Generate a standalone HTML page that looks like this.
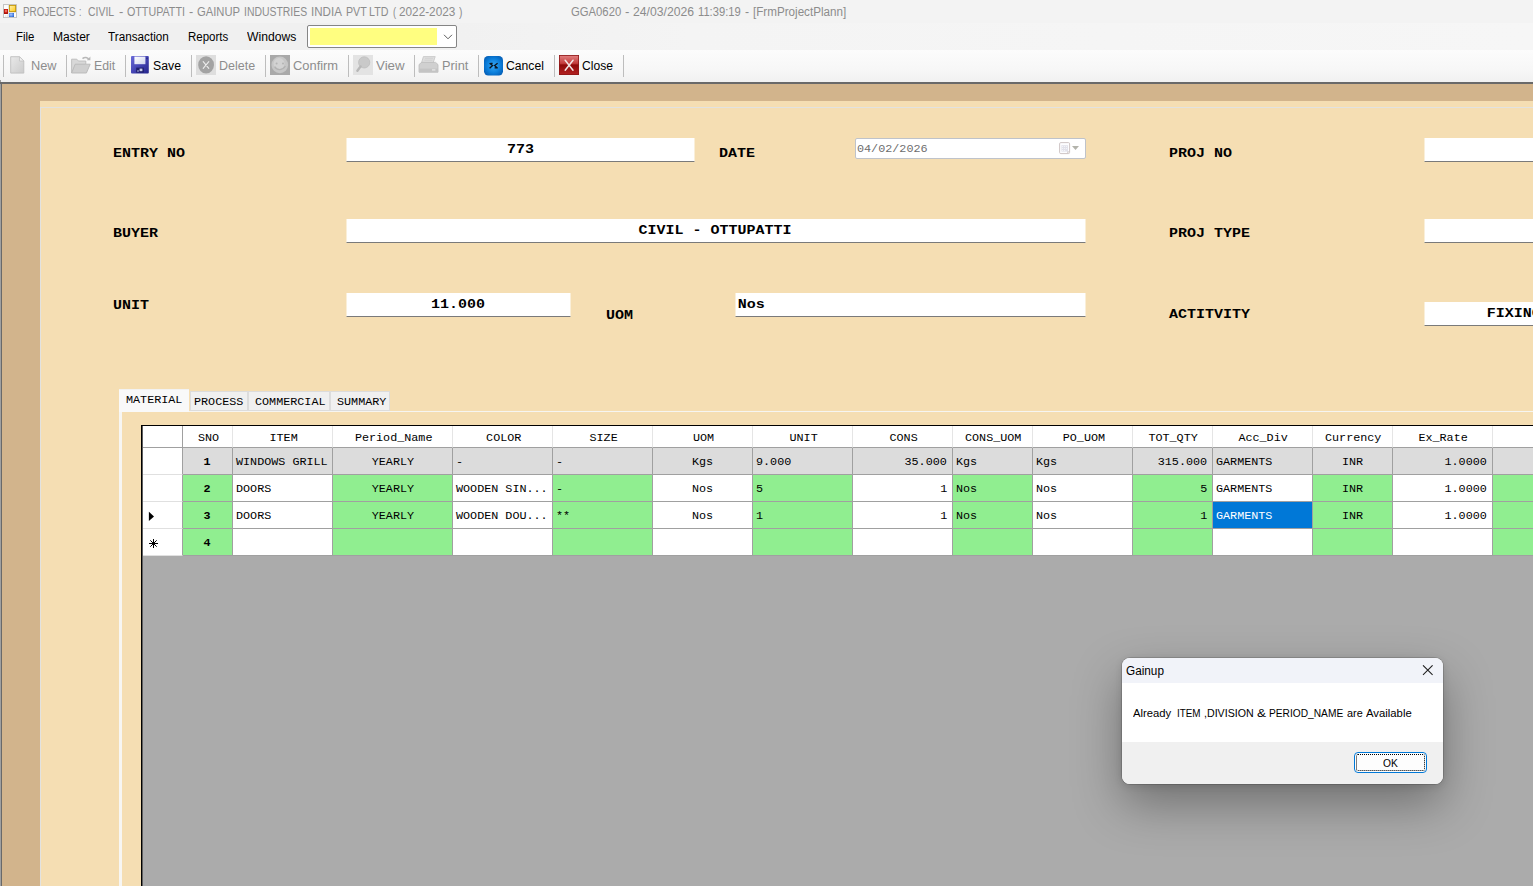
<!DOCTYPE html><html><head><meta charset="utf-8"><title>FrmProjectPlann</title><style>
html,body{margin:0;padding:0}
body{width:1533px;height:886px;overflow:hidden;position:relative;background:#d2b48c;font-family:"Liberation Sans",sans-serif;font-size:12px;color:#000}
div,span{position:absolute;box-sizing:border-box;white-space:pre}
i{font-style:normal;display:inline-block;white-space:pre}
.u{transform-origin:0 0;font-family:"Liberation Sans",sans-serif}
.mono{font-family:"Liberation Mono",monospace}
#title{left:0;top:0;width:1533px;height:23px;background:#f3f3f3}
#title span{top:5px;font-size:12px;color:#8c8c8c;line-height:15px}
#menu{left:0;top:23px;width:1533px;height:27px;background:linear-gradient(to right,#f0f0f0 0,#f0f0f0 25%,#f4f4f4 45%,#f6f6f6 100%)}
#menu span{top:7px;font-size:12px;line-height:15px;color:#000}
#tool{left:0;top:50px;width:1533px;height:32px;background:linear-gradient(#fcfcfc,#f7f7f7 60%,#f1f1f1)}
#tool .sep{top:5px;width:1px;height:22px;background:#bdbdbd}
#tool .t{top:8px;font-size:12.5px;line-height:16px;color:#000}
#tool .d{color:#8d8d8d}
svg{position:absolute}
#dark{left:0;top:82px;width:1533px;height:2px;background:#696969}
#lft0{left:0;top:84px;width:1px;height:802px;background:#a0a0a0}
#lft1{left:1px;top:82px;width:1px;height:804px;background:#696969}
#panel{left:40px;top:101px;width:1493px;height:785px;background:#f5deb3}
#gb{left:40px;top:107px;width:1500px;height:800px;border-left:1px solid #e2e2e0;border-top:1px solid #e2e2e0}
.lbl{font-family:"Liberation Mono",monospace;font-weight:bold;font-size:13px;line-height:16px;color:#000;transform:translateY(-0.2px) scaleX(1.1538);transform-origin:0 0}
.tb{background:#fff;border-bottom:1px solid #7a7a7a;height:24px;font-family:"Liberation Mono",monospace;font-weight:bold;font-size:13px;line-height:22px;text-align:center;overflow:hidden;transform:translateX(0.5px)}
.tb i{transform:translate(-0.8px,0.7px) scaleX(1.1538)}
.tab{font-family:"Liberation Mono",monospace;font-size:10.5px;line-height:13px;color:#000;transform:scaleX(1.119);transform-origin:0 0}
.g{font-family:"Liberation Mono",monospace;font-size:10.5px;line-height:26px;color:#000;overflow:hidden;border-right:1px solid #a0a0a0;border-bottom:1px solid #a0a0a0;height:27px}
.g i{transform:translateY(0.6px) scaleX(1.119)}.gh i{transform:translate(1px,0.2px) scaleX(1.119)}
.gh{font-family:"Liberation Mono",monospace;font-size:10.5px;line-height:25px;color:#000;overflow:hidden;background:#fff;border-right:1px solid #e5e5e5;border-bottom:1px solid #a0a0a0;height:22px;text-align:center;top:426px}
.c{text-align:center}.r{text-align:right;padding-right:5px}.l{text-align:left;padding-left:3px}
.r i{transform-origin:100% 0}.l i{transform-origin:0 0}
.b{font-weight:bold}
.gr{background:#90ee90}.wh{background:#fff}.gy{background:#dcdcdc}.sel{background:#0078d7;color:#fff}
</style></head><body>
<div id="title">
<svg style="left:3px;top:4px" width="14" height="14" viewBox="0 0 14 14"><defs><linearGradient id="iy" x1="0" y1="0" x2="1" y2="1"><stop offset="0" stop-color="#fff3b0"/><stop offset="1" stop-color="#ffc814"/></linearGradient><radialGradient id="ir" cx="0.5" cy="0.4" r="0.6"><stop offset="0" stop-color="#ffb0a8"/><stop offset="0.5" stop-color="#d8281a"/><stop offset="1" stop-color="#9a0800"/></radialGradient><radialGradient id="ib" cx="0.4" cy="0.4" r="0.7"><stop offset="0" stop-color="#a8c8ff"/><stop offset="1" stop-color="#2a66d4"/></radialGradient></defs><rect x="0.5" y="0.6" width="13" height="13" fill="#fdfdfd" stroke="#bdbdbd" stroke-width="0.9"/><path d="M5.6 0.6v13M0.5 8.6h5M5.6 8.4h8" stroke="#d4d4d4" stroke-width="0.6"/><rect x="0.9" y="4.9" width="4.1" height="5.1" rx="0.4" fill="url(#ir)"/><rect x="6.4" y="1.4" width="6.2" height="6.2" fill="url(#iy)" stroke="#c39400" stroke-width="0.9"/><rect x="6" y="9" width="5" height="4" fill="url(#ib)"/><path d="M4.6 10.6v2.8M2.8 11v2.4" stroke="#cfcfcf" stroke-width="0.5"/></svg>
<span id="t0" class="u " style="left:23.15px;transform:scaleX(0.8232);">PROJECTS</span>
<span id="t1" class="u " style="left:79.35px;transform:scaleX(0.7178);">:</span>
<span id="t2" class="u " style="left:88.45px;transform:scaleX(0.8695);">CIVIL</span>
<span id="t3" class="u " style="left:119.05px;transform:scaleX(1.0750);">-</span>
<span id="t4" class="u " style="left:126.55px;transform:scaleX(0.8923);">OTTUPATTI</span>
<span id="t5" class="u " style="left:189.15px;transform:scaleX(1.0500);">-</span>
<span id="t6" class="u " style="left:196.55px;transform:scaleX(0.9366);">GAINUP</span>
<span id="t7" class="u " style="left:243.85px;transform:scaleX(0.8681);">INDUSTRIES</span>
<span id="t8" class="u " style="left:310.95px;transform:scaleX(0.9652);">INDIA</span>
<span id="t9" class="u " style="left:345.75px;transform:scaleX(0.8867);">PVT</span>
<span id="t10" class="u " style="left:369.45px;transform:scaleX(0.8907);">LTD</span>
<span id="t11" class="u " style="left:392.55px;transform:scaleX(0.7750);">(</span>
<span id="t12" class="u " style="left:398.95px;transform:scaleX(0.9810);">2022-2023</span>
<span id="t13" class="u " style="left:458.65px;transform:scaleX(0.8500);">)</span>
<span id="t14" class="u " style="left:570.95px;transform:scaleX(0.9405);">GGA0620</span>
<span id="t15" class="u " style="left:624.95px;transform:scaleX(1.1000);">-</span>
<span id="t16" class="u " style="left:632.55px;transform:scaleX(1.0156);">24/03/2026</span>
<span id="t17" class="u " style="left:697.75px;transform:scaleX(0.9317);">11:39:19</span>
<span id="t18" class="u " style="left:744.65px;transform:scaleX(1.0250);">-</span>
<span id="t19" class="u " style="left:752.55px;transform:scaleX(0.9705);">[FrmProjectPlann]</span>
</div>
<div id="menu">
<span id="m0" class="u " style="left:16.05px;transform:scaleX(0.9512);">File</span>
<span id="m1" class="u " style="left:52.95px;transform:scaleX(1.0058);">Master</span>
<span id="m2" class="u " style="left:108.35px;transform:scaleX(0.9767);">Transaction</span>
<span id="m3" class="u " style="left:188.25px;transform:scaleX(0.9564);">Reports</span>
<span id="m4" class="u " style="left:246.75px;transform:scaleX(1.0126);">Windows</span>
<div style="left:307px;top:2px;width:150px;height:23px;background:#fff;border:1px solid #858585;border-radius:2px"></div>
<div style="left:310px;top:5px;width:127px;height:17px;background:#fffe80"></div>
<svg style="left:443px;top:11px" width="10" height="7" viewBox="0 0 10 7"><path d="M1 0.8 L5 4.8 L9 0.8" fill="none" stroke="#555" stroke-width="0.95"/></svg>
</div>
<div id="tool">
<div class="sep" style="left:3px"></div>
<div class="sep" style="left:66px"></div>
<div class="sep" style="left:125px"></div>
<div class="sep" style="left:191px"></div>
<div class="sep" style="left:265px"></div>
<div class="sep" style="left:348px"></div>
<div class="sep" style="left:414px"></div>
<div class="sep" style="left:478px"></div>
<div class="sep" style="left:554px"></div>
<div class="sep" style="left:623px"></div>
<span id="b0" class="u t d" style="left:31.05px;transform:scaleX(1.0234);">New</span>
<span id="b1" class="u t d" style="left:94.25px;transform:scaleX(0.9839);">Edit</span>
<span id="b2" class="u t" style="left:153.15px;transform:scaleX(0.9825);">Save</span>
<span id="b3" class="u t d" style="left:219.05px;transform:scaleX(0.9989);">Delete</span>
<span id="b4" class="u t d" style="left:293.15px;transform:scaleX(1.0305);">Confirm</span>
<span id="b5" class="u t d" style="left:375.85px;transform:scaleX(1.0642);">View</span>
<span id="b6" class="u t d" style="left:442.25px;transform:scaleX(1.0232);">Print</span>
<span id="b7" class="u t" style="left:506.25px;transform:scaleX(0.9737);">Cancel</span>
<span id="b8" class="u t" style="left:582.15px;transform:scaleX(0.9666);">Close</span>
<svg style="left:10px;top:6px" width="15" height="18" viewBox="0 0 15 18"><defs><linearGradient id="gn" x1="0" y1="0" x2="1" y2="1"><stop offset="0" stop-color="#e9e9e9"/><stop offset="1" stop-color="#cbcbcb"/></linearGradient></defs><path d="M0.7 0.7h8.8l4.3 4.3v12.1H0.7z" fill="url(#gn)" stroke="#bfbfbf" stroke-width="0.9"/><path d="M9.5 0.7v4.3h4.3z" fill="#f1f1f1" stroke="#bfbfbf" stroke-width="0.7"/></svg>
<svg style="left:71px;top:6px" width="20" height="18" viewBox="0 0 20 18"><path d="M0.6 17V3.2h5.2l1.6 1.8h7.4v3" fill="#d8d8d8" stroke="#bcbcbc" stroke-width="0.9"/><path d="M0.6 17l3.6-8.8h15l-3.8 8.8z" fill="#cfcfcf" stroke="#b8b8b8" stroke-width="0.9"/><path d="M11.5 2.6c2.2-1.8 5-1.4 6.3 0.8" fill="none" stroke="#b8b8b8" stroke-width="1.6"/><path d="M15.8 4.2h3.6V0.6z" fill="#b8b8b8"/></svg>
<svg style="left:131px;top:6px" width="18" height="18" viewBox="0 0 18 18"><defs><linearGradient id="gs" x1="0" y1="0" x2="1" y2="1"><stop offset="0" stop-color="#6a6ad8"/><stop offset="0.5" stop-color="#4545b4"/><stop offset="1" stop-color="#24248a"/></linearGradient><linearGradient id="gl" x1="0" y1="0" x2="1" y2="1"><stop offset="0" stop-color="#ffffff"/><stop offset="1" stop-color="#cfd4ee"/></linearGradient></defs><rect x="0" y="0" width="17.8" height="17.6" rx="1" fill="url(#gs)"/><rect x="3.4" y="0.6" width="11" height="7.6" fill="url(#gl)"/><rect x="15.4" y="1.6" width="1.2" height="1.6" fill="#22227a"/><rect x="5.2" y="11.6" width="7.6" height="5" fill="#1e1e6e"/><rect x="8.6" y="12.6" width="2.8" height="2.6" fill="#c8cce8"/><rect x="6" y="14.4" width="2" height="1.2" fill="#9aa0d0"/></svg>
<svg style="left:196px;top:5px" width="20" height="20" viewBox="0 0 20 20"><rect width="20" height="20" fill="#dedede"/><ellipse cx="10.1" cy="9.9" rx="7.9" ry="8.6" fill="#a3a3a3"/><path d="M7.2 6.6l5.6 6.8M12.8 6.6l-5.6 6.8" stroke="#ececec" stroke-width="1.1" stroke-linecap="round"/></svg>
<svg style="left:270px;top:5px" width="20" height="20" viewBox="0 0 20 20"><rect width="20" height="20" fill="#a9a9a9"/><circle cx="9.8" cy="9.9" r="8.3" fill="#c6c6c6"/><circle cx="9" cy="8.6" r="5.5" fill="#d2d2d2"/><circle cx="6.6" cy="8.4" r="1" fill="#b4b4b4"/><circle cx="13" cy="8.4" r="1" fill="#b4b4b4"/><path d="M4.6 11.6c2.6 4 8 4 10.8-0.6" fill="none" stroke="#b2b2b2" stroke-width="1.3"/></svg>
<svg style="left:353px;top:5px" width="20" height="20" viewBox="0 0 20 20"><rect width="20" height="20" fill="#e3e3e3"/><circle cx="11.2" cy="7.4" r="5.6" fill="#c9c9c9" stroke="#bcbcbc" stroke-width="0.8"/><path d="M7.6 11.4L4.4 15.8" stroke="#b8b8b8" stroke-width="2.4" stroke-linecap="round"/></svg>
<svg style="left:418px;top:6px" width="21" height="18" viewBox="0 0 21 18"><path d="M5.4 0.6h11.8l-2.2 6.6H3.4z" fill="#dedede" stroke="#c4c4c4" stroke-width="0.8"/><path d="M7 2.4h8M6.4 4.2h8" stroke="#d0d0d0" stroke-width="0.9"/><path d="M1 8.6l2.6-2.2h14l2.4 2.2v7.6H1z" fill="#d0d0d0" stroke="#bdbdbd" stroke-width="0.8"/><rect x="1" y="12.6" width="19" height="3.6" fill="#c4c4c4"/><rect x="14" y="13.2" width="3.4" height="1.4" fill="#e4e4e4"/></svg>
<svg style="left:484px;top:5.5px" width="19" height="20" viewBox="0 0 19 20"><defs><radialGradient id="gc" cx="0.5" cy="0.5" r="0.6"><stop offset="0" stop-color="#3aa8f4"/><stop offset="0.6" stop-color="#0c80dc"/><stop offset="1" stop-color="#0560b8"/></radialGradient></defs><rect x="0" y="0" width="19" height="19.4" rx="4.2" fill="url(#gc)"/><path d="M5.6 7.2l3 2.4-3 2.6M13.6 7.2l-3 2.4 3 2.6M6.6 7.4h2M10.6 11.8h2.2" fill="none" stroke="#0a1420" stroke-width="1.3"/></svg>
<svg style="left:559px;top:5px" width="20" height="20" viewBox="0 0 20 20"><defs><linearGradient id="gx" x1="0" y1="0" x2="0" y2="1"><stop offset="0" stop-color="#e48484"/><stop offset="0.42" stop-color="#c23c3c"/><stop offset="0.5" stop-color="#8e0a0a"/><stop offset="1" stop-color="#b42222"/></linearGradient></defs><rect width="20" height="20" fill="url(#gx)"/><rect x="0.4" y="0.4" width="19.2" height="19.2" fill="none" stroke="#8e1818" stroke-width="0.8"/><path d="M6.2 5.2l7.8 10M14 5.2L6.2 15.2" stroke="#f1e4e4" stroke-width="1.5" stroke-linecap="round"/></svg>

</div>
<div style="left:0;top:80px;width:1px;height:2px;background:#9a9a9a"></div>
<div id="dark"></div><div id="lft0"></div><div id="lft1"></div>
<div id="panel"></div><div id="gb"></div>
<span class="lbl" style="left:113px;top:146px">ENTRY NO</span>
<span class="lbl" style="left:719px;top:146px">DATE</span>
<span class="lbl" style="left:1169px;top:146px">PROJ NO</span>
<span class="lbl" style="left:113px;top:226px">BUYER</span>
<span class="lbl" style="left:1169px;top:226px">PROJ TYPE</span>
<span class="lbl" style="left:113px;top:298px">UNIT</span>
<span class="lbl" style="left:606px;top:307.5px">UOM</span>
<span class="lbl" style="left:1169px;top:307px">ACTITVITY</span>
<div class="tb" style="left:346px;top:138px;width:348px"><i style="left:1px;position:relative">773</i></div>
<div class="tb" style="left:1424px;top:138px;width:120px"></div>
<div class="tb" style="left:346px;top:219px;width:739px"><i>CIVIL - OTTUPATTI</i></div>
<div class="tb" style="left:1424px;top:219px;width:120px"></div>
<div class="tb" style="left:346px;top:293px;width:224px"><i>11.000</i></div>
<div class="tb l" style="left:735px;top:293px;width:350px;padding-left:2.5px"><i>Nos</i></div>
<div class="tb l" style="left:1424px;top:302px;width:200px;padding-left:63px"><i>FIXING</i></div>
<div style="left:855px;top:138px;width:231px;height:21px;background:#fff;border:1px solid #bfc3ca;border-radius:2px"></div>
<span class="tab" style="left:857px;top:141px;line-height:14px;color:#6d6d6d;transform:translateY(0.5px) scaleX(1.12)">04/02/2026</span>
<svg style="left:1058px;top:141px" width="24" height="14" viewBox="0 0 24 14"><rect x="1.6" y="1.6" width="10" height="11" rx="1.2" fill="#fdfdff" stroke="#c8bebe" stroke-width="0.9"/><rect x="3.4" y="4.2" width="6.6" height="6.4" fill="#e1e1ea"/><g fill="#fbfbfe"><rect x="4.2" y="5" width="0.9" height="0.9"/><rect x="6.2" y="5" width="0.9" height="0.9"/><rect x="8.2" y="5" width="0.9" height="0.9"/><rect x="4.2" y="7" width="0.9" height="0.9"/><rect x="6.2" y="7" width="0.9" height="0.9"/><rect x="8.2" y="7" width="0.9" height="0.9"/><rect x="4.2" y="9" width="0.9" height="0.9"/><rect x="6.2" y="9" width="0.9" height="0.9"/></g><path d="M9.4 12.4l2-2h-2z" fill="#c8bebe"/><path d="M14 5h7l-3.5 4z" fill="#b3b3ab"/></svg>
<div style="left:119px;top:411px;width:1420px;height:480px;border-left:3px solid #f7f6f3;border-top:1px solid #f6f5f1"></div>
<div style="left:119px;top:389px;width:70px;height:23px;background:#f9f9f9;border-top:1px solid #f2f2f2"></div>
<span class="tab" style="left:125.6px;top:394px">MATERIAL</span>
<div style="left:190px;top:391px;width:58px;height:20px;background:#f0f0f0;border:1px solid #dcdcdc"></div>
<span class="tab" style="left:194.4px;top:396px">PROCESS</span>
<div style="left:248px;top:391px;width:82px;height:20px;background:#f0f0f0;border:1px solid #dcdcdc"></div>
<span class="tab" style="left:254.8px;top:396px">COMMERCIAL</span>
<div style="left:330px;top:391px;width:60px;height:20px;background:#f0f0f0;border:1px solid #dcdcdc"></div>
<span class="tab" style="left:337.2px;top:396px">SUMMARY</span>
<div style="left:141px;top:425px;width:1400px;height:470px;background:#ababab;border-left:1px solid #000;border-top:1px solid #000;box-shadow:inset 1px 1px 0 #5e5e5e"></div>
<div class="gh" style="left:143px;width:40px;border-right:1px solid #a0a0a0"></div>
<div class="gh" style="left:183px;width:50px"><i>SNO</i></div>
<div class="gh" style="left:233px;width:100px"><i>ITEM</i></div>
<div class="gh" style="left:333px;width:120px"><i>Period_Name</i></div>
<div class="gh" style="left:453px;width:100px"><i>COLOR</i></div>
<div class="gh" style="left:553px;width:100px"><i>SIZE</i></div>
<div class="gh" style="left:653px;width:100px"><i>UOM</i></div>
<div class="gh" style="left:753px;width:100px"><i>UNIT</i></div>
<div class="gh" style="left:853px;width:100px"><i>CONS</i></div>
<div class="gh" style="left:953px;width:80px"><i>CONS_UOM</i></div>
<div class="gh" style="left:1033px;width:100px"><i>PO_UOM</i></div>
<div class="gh" style="left:1133px;width:80px"><i>TOT_QTY</i></div>
<div class="gh" style="left:1213px;width:100px"><i>Acc_Div</i></div>
<div class="gh" style="left:1313px;width:80px"><i>Currency</i></div>
<div class="gh" style="left:1393px;width:100px"><i>Ex_Rate</i></div>
<div class="gh" style="left:1493px;width:60px"><i></i></div>
<div class="g wh" style="left:143px;top:448px;width:40px;border-bottom-color:#e0e0e0"></div>
<div class="g gy c b" style="left:183px;top:448px;width:50px"><i>1</i></div>
<div class="g gy l" style="left:233px;top:448px;width:100px"><i>WINDOWS GRILL</i></div>
<div class="g gy c" style="left:333px;top:448px;width:120px"><i>YEARLY</i></div>
<div class="g gy l" style="left:453px;top:448px;width:100px"><i>-</i></div>
<div class="g gy l" style="left:553px;top:448px;width:100px"><i>-</i></div>
<div class="g gy c" style="left:653px;top:448px;width:100px"><i>Kgs</i></div>
<div class="g gy l" style="left:753px;top:448px;width:100px"><i>9.000</i></div>
<div class="g gy r" style="left:853px;top:448px;width:100px"><i>35.000</i></div>
<div class="g gy l" style="left:953px;top:448px;width:80px"><i>Kgs</i></div>
<div class="g gy l" style="left:1033px;top:448px;width:100px"><i>Kgs</i></div>
<div class="g gy r" style="left:1133px;top:448px;width:80px"><i>315.000</i></div>
<div class="g gy l" style="left:1213px;top:448px;width:100px"><i>GARMENTS</i></div>
<div class="g gy c" style="left:1313px;top:448px;width:80px"><i>INR</i></div>
<div class="g gy r" style="left:1393px;top:448px;width:100px"><i>1.0000</i></div>
<div class="g gy l" style="left:1493px;top:448px;width:60px"></div>
<div class="g wh" style="left:143px;top:475px;width:40px;border-bottom-color:#e0e0e0"></div>
<div class="g gr c b" style="left:183px;top:475px;width:50px"><i>2</i></div>
<div class="g wh l" style="left:233px;top:475px;width:100px"><i>DOORS</i></div>
<div class="g gr c" style="left:333px;top:475px;width:120px"><i>YEARLY</i></div>
<div class="g wh l" style="left:453px;top:475px;width:100px"><i>WOODEN SIN...</i></div>
<div class="g gr l" style="left:553px;top:475px;width:100px"><i>-</i></div>
<div class="g wh c" style="left:653px;top:475px;width:100px"><i>Nos</i></div>
<div class="g gr l" style="left:753px;top:475px;width:100px"><i>5</i></div>
<div class="g wh r" style="left:853px;top:475px;width:100px"><i>1</i></div>
<div class="g gr l" style="left:953px;top:475px;width:80px"><i>Nos</i></div>
<div class="g wh l" style="left:1033px;top:475px;width:100px"><i>Nos</i></div>
<div class="g gr r" style="left:1133px;top:475px;width:80px"><i>5</i></div>
<div class="g wh l" style="left:1213px;top:475px;width:100px"><i>GARMENTS</i></div>
<div class="g gr c" style="left:1313px;top:475px;width:80px"><i>INR</i></div>
<div class="g wh r" style="left:1393px;top:475px;width:100px"><i>1.0000</i></div>
<div class="g gr l" style="left:1493px;top:475px;width:60px"></div>
<div class="g wh" style="left:143px;top:502px;width:40px;border-bottom-color:#e0e0e0"></div>
<div class="g gr c b" style="left:183px;top:502px;width:50px"><i>3</i></div>
<div class="g wh l" style="left:233px;top:502px;width:100px"><i>DOORS</i></div>
<div class="g gr c" style="left:333px;top:502px;width:120px"><i>YEARLY</i></div>
<div class="g wh l" style="left:453px;top:502px;width:100px"><i>WOODEN DOU...</i></div>
<div class="g gr l" style="left:553px;top:502px;width:100px"><i>**</i></div>
<div class="g wh c" style="left:653px;top:502px;width:100px"><i>Nos</i></div>
<div class="g gr l" style="left:753px;top:502px;width:100px"><i>1</i></div>
<div class="g wh r" style="left:853px;top:502px;width:100px"><i>1</i></div>
<div class="g gr l" style="left:953px;top:502px;width:80px"><i>Nos</i></div>
<div class="g wh l" style="left:1033px;top:502px;width:100px"><i>Nos</i></div>
<div class="g gr r" style="left:1133px;top:502px;width:80px"><i>1</i></div>
<div class="g sel l" style="left:1213px;top:502px;width:100px"><i>GARMENTS</i></div>
<div class="g gr c" style="left:1313px;top:502px;width:80px"><i>INR</i></div>
<div class="g wh r" style="left:1393px;top:502px;width:100px"><i>1.0000</i></div>
<div class="g gr l" style="left:1493px;top:502px;width:60px"></div>
<div class="g wh" style="left:143px;top:529px;width:40px;border-bottom-color:#e0e0e0"></div>
<div class="g gr c b" style="left:183px;top:529px;width:50px"><i>4</i></div>
<div class="g wh l" style="left:233px;top:529px;width:100px"></div>
<div class="g gr c" style="left:333px;top:529px;width:120px"></div>
<div class="g wh l" style="left:453px;top:529px;width:100px"></div>
<div class="g gr l" style="left:553px;top:529px;width:100px"></div>
<div class="g wh c" style="left:653px;top:529px;width:100px"></div>
<div class="g gr l" style="left:753px;top:529px;width:100px"></div>
<div class="g wh r" style="left:853px;top:529px;width:100px"></div>
<div class="g gr l" style="left:953px;top:529px;width:80px"></div>
<div class="g wh l" style="left:1033px;top:529px;width:100px"></div>
<div class="g gr r" style="left:1133px;top:529px;width:80px"></div>
<div class="g wh l" style="left:1213px;top:529px;width:100px"></div>
<div class="g gr c" style="left:1313px;top:529px;width:80px"></div>
<div class="g wh r" style="left:1393px;top:529px;width:100px"></div>
<div class="g gr l" style="left:1493px;top:529px;width:60px"></div>
<svg style="left:148px;top:511px" width="8" height="11" viewBox="0 0 8 11"><path d="M0.9 0.7 L6 5.4 L0.9 10.1z" fill="#000"/></svg>
<svg style="left:148px;top:538px" width="11" height="11" viewBox="0 0 11 11"><path d="M5.5 1v9M1 5.5h9M2.3 2.3l6.4 6.4M8.7 2.3l-6.4 6.4" stroke="#000" stroke-width="1" fill="none"/></svg>
<div id="dlg" style="left:1122px;top:658px;width:321px;height:126px;border-radius:8px;background:#fff;box-shadow:0 0 0 1px rgba(0,0,0,0.14),0 20px 48px 0 rgba(0,0,0,0.34),0 2px 8px rgba(0,0,0,0.12);overflow:hidden">
<div style="left:0;top:0;width:321px;height:25px;background:#f1f3f9"></div>
<span id="dt" class="u " style="left:4.00px;transform:scaleX(0.9805);top:6px;font-size:12px;line-height:15px">Gainup</span>
<svg style="left:300px;top:7px" width="11" height="11" viewBox="0 0 11 11"><path d="M1 0.3l9.6 9.6M10.6 0.3l-9.6 9.6" stroke="#222" stroke-width="1.05"/></svg>
<span id="dm0" class="u " style="left:10.85px;transform:scaleX(1.0242);top:48px;font-size:11px;line-height:15px">Already</span>
<span id="dm1" class="u " style="left:55.25px;transform:scaleX(0.8980);top:48px;font-size:11px;line-height:15px">ITEM</span>
<span id="dm2" class="u " style="left:81.50px;transform:scaleX(0.9680);top:48px;font-size:11px;line-height:15px">,DIVISION</span>
<span id="dm3" class="u " style="left:135.00px;transform:scaleX(1.2323);top:48px;font-size:11px;line-height:15px">&amp;</span>
<span id="dm4" class="u " style="left:146.75px;transform:scaleX(0.9266);top:48px;font-size:11px;line-height:15px">PERIOD_NAME</span>
<span id="dm5" class="u " style="left:224.85px;transform:scaleX(0.9870);top:48px;font-size:11px;line-height:15px">are</span>
<span id="dm6" class="u " style="left:244.00px;transform:scaleX(1.0280);top:48px;font-size:11px;line-height:15px">Available</span>
<div style="left:0;top:84px;width:321px;height:42px;background:#f0f0f0"></div>
<div style="left:232px;top:94px;width:73px;height:21px;background:#fdfdfd;border:1px solid #0078d7;border-radius:4px"></div>
<div style="left:234px;top:96px;width:69px;height:17px;border:1px dotted #000;border-radius:2px"></div>
<span id="ok" class="u " style="left:261.15px;transform:scaleX(0.9305);top:97.6px;font-size:11px;line-height:15px">OK</span>
</div>
</body></html>
